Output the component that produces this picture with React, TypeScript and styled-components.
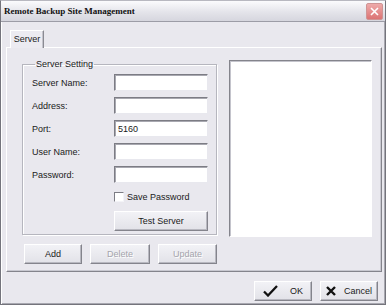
import React from "react";
import styled, { createGlobalStyle } from "styled-components";

const Global = createGlobalStyle`
  html, body { margin: 0; padding: 0; background: #ffffff; }
  * { box-sizing: border-box; }
`;

const Window = styled.div`
  width: 386px;
  height: 305px;
  display: flex;
  flex-direction: column;
  background: #e9e8ee;
  border: 1px solid #74747c;
  border-top-color: #b8b8c0;
  box-shadow: inset 1px 0 0 #ffffff, inset -1px -1px 0 #a8a8b0;
  font-family: "Liberation Sans", Arial, sans-serif;
  font-size: 9px;
  color: #1a1a1a;
  overflow: hidden;
`;

const TitleBar = styled.div`
  height: 21px;
  flex: none;
  display: flex;
  align-items: center;
  justify-content: space-between;
  padding: 0 2px 0 3px;
  background: linear-gradient(#fbfbfd, #e4e4ea 55%, #d6d6de);
  border-bottom: 1px solid #9c9ca6;
`;

const Title = styled.span`
  font-family: "Liberation Serif", "Times New Roman", serif;
  font-weight: bold;
  font-size: 9px;
  color: #111;
`;

const CloseButton = styled.div`
  width: 17px;
  height: 17px;
  border-radius: 2px;
  border: 1px solid #cf9494;
  background: linear-gradient(#eeaaaa, #dc7474);
  display: flex;
  align-items: center;
  justify-content: center;
`;

const Body = styled.div`
  flex: 1;
  display: flex;
  flex-direction: column;
  padding: 8px 3px 0 5px;
`;

const TabStrip = styled.div`
  display: flex;
  padding-left: 4px;
  height: 17px;
  flex: none;
`;

const Tab = styled.div`
  width: 34px;
  height: 18px;
  padding-top: 3px;
  text-align: center;
  background: #ecebf1;
  border-top: 1px solid #ffffff;
  border-left: 1px solid #ffffff;
  border-right: 1px solid #8a8a92;
  box-shadow: inset -1px 0 0 #c4c4cc;
  position: relative;
  z-index: 1;
`;

const TabPanel = styled.div`
  height: 225px;
  flex: none;
  display: flex;
  gap: 12px;
  padding: 12px 8px 0 15px;
  border-top: 1px solid #ffffff;
  border-left: 1px solid #ffffff;
  border-right: 1px solid #84848c;
  border-bottom: 1px solid #84848c;
  box-shadow: inset -1px -1px 0 #c8c8d0;
`;

const LeftColumn = styled.div`
  width: 195px;
  display: flex;
  flex-direction: column;
`;

const GroupBox = styled.fieldset`
  margin: 0;
  height: 175px;
  padding: 5px 8px 0 9px;
  border: 1px solid #b6b6be;
  box-shadow: 1px 1px 0 #ffffff, inset 1px 1px 0 #ffffff;
  display: flex;
  flex-direction: column;
`;

const Legend = styled.legend`
  padding: 0 1px;
  margin-left: 3px;
  font-size: 9px;
  line-height: 9px;
`;

const FormRow = styled.div`
  display: flex;
  align-items: center;
  height: 17px;
  margin-bottom: 6px;
`;

const Label = styled.span`
  width: 82px;
  flex: none;
`;

const TextBox = styled.div`
  width: 94px;
  height: 17px;
  background: #ffffff;
  border-top: 1px solid #7c7c84;
  border-left: 1px solid #7c7c84;
  border-right: 1px solid #e8e8ee;
  border-bottom: 1px solid #e8e8ee;
  box-shadow: inset 1px 1px 0 #a8a8b0;
  padding: 3px 0 0 3px;
  font-size: 9px;
`;

const CheckRow = styled.div`
  display: flex;
  align-items: center;
  gap: 3px;
  margin: 1px 0 0 82px;
  height: 14px;
`;

const CheckBox = styled.div`
  width: 10px;
  height: 10px;
  background: #ffffff;
  border-top: 1px solid #7c7c84;
  border-left: 1px solid #7c7c84;
  border-right: 1px solid #f4f4f8;
  border-bottom: 1px solid #f4f4f8;
`;

const Button = styled.div<{ $w: number; $disabled?: boolean; $gap?: number }>`
  width: ${(p) => p.$w}px;
  height: 20px;
  flex: none;
  display: flex;
  align-items: center;
  justify-content: center;
  gap: ${(p) => p.$gap ?? 0}px;
  background: linear-gradient(#f2f2f6, #e2e2e8);
  border-top: 1px solid #ffffff;
  border-left: 1px solid #ffffff;
  border-right: 1px solid #84848c;
  border-bottom: 1px solid #84848c;
  box-shadow: inset -1px -1px 0 #b8b8c0;
  font-size: 9px;
  color: ${(p) => (p.$disabled ? "#a4a4ac" : "#1a1a1a")};
  text-shadow: ${(p) => (p.$disabled ? "1px 1px 0 #ffffff" : "none")};
`;

const TestRow = styled.div`
  margin: 7px 0 0 82px;
`;

const ActionRow = styled.div`
  display: flex;
  gap: 8px;
  margin: 9px 0 0 2px;
`;

const ListBox = styled.div`
  width: 143px;
  height: 177px;
  background: #ffffff;
  border-top: 1px solid #84848c;
  border-left: 1px solid #84848c;
  border-right: 1px solid #ffffff;
  border-bottom: 1px solid #ffffff;
  box-shadow: inset 1px 1px 0 #c4c4cc;
`;

const Footer = styled.div`
  flex: 1;
  display: flex;
  justify-content: flex-end;
  align-items: flex-start;
  gap: 8px;
  padding: 9px 4px 0 0;
`;

const Check = () => (
  <svg width="15" height="12" viewBox="0 0 15 12">
    <path d="M1 6.5 L5 10.5 L14 1" fill="none" stroke="#111" strokeWidth="2.3" />
  </svg>
);

const Cross = () => (
  <svg width="10" height="10" viewBox="0 0 10 10">
    <path d="M1 1 L9 9 M9 1 L1 9" stroke="#111" strokeWidth="2.4" />
  </svg>
);

const fields = [
  { label: "Server Name:", value: "" },
  { label: "Address:", value: "" },
  { label: "Port:", value: "5160" },
  { label: "User Name:", value: "" },
  { label: "Password:", value: "" },
];

export default function App() {
  return (
    <>
      <Global />
      <Window>
        <TitleBar>
          <Title>Remote Backup Site Management</Title>
          <CloseButton>
            <svg width="9" height="9" viewBox="0 0 9 9">
              <path d="M1 1 L8 8 M8 1 L1 8" stroke="#ffffff" strokeWidth="1.6" />
            </svg>
          </CloseButton>
        </TitleBar>
        <Body>
          <TabStrip>
            <Tab>Server</Tab>
          </TabStrip>
          <TabPanel>
            <LeftColumn>
              <GroupBox>
                <Legend>Server Setting</Legend>
                {fields.map((f) => (
                  <FormRow key={f.label}>
                    <Label>{f.label}</Label>
                    <TextBox>{f.value}</TextBox>
                  </FormRow>
                ))}
                <CheckRow>
                  <CheckBox />
                  <span>Save Password</span>
                </CheckRow>
                <TestRow>
                  <Button $w={94}>Test Server</Button>
                </TestRow>
              </GroupBox>
              <ActionRow>
                <Button $w={58}>Add</Button>
                <Button $w={60} $disabled>
                  Delete
                </Button>
                <Button $w={59} $disabled>
                  Update
                </Button>
              </ActionRow>
            </LeftColumn>
            <ListBox />
          </TabPanel>
          <Footer>
            <Button $w={58} $gap={12}>
              <Check />
              <span>OK</span>
            </Button>
            <Button $w={58} $gap={8}>
              <Cross />
              <span>Cancel</span>
            </Button>
          </Footer>
        </Body>
      </Window>
    </>
  );
}
